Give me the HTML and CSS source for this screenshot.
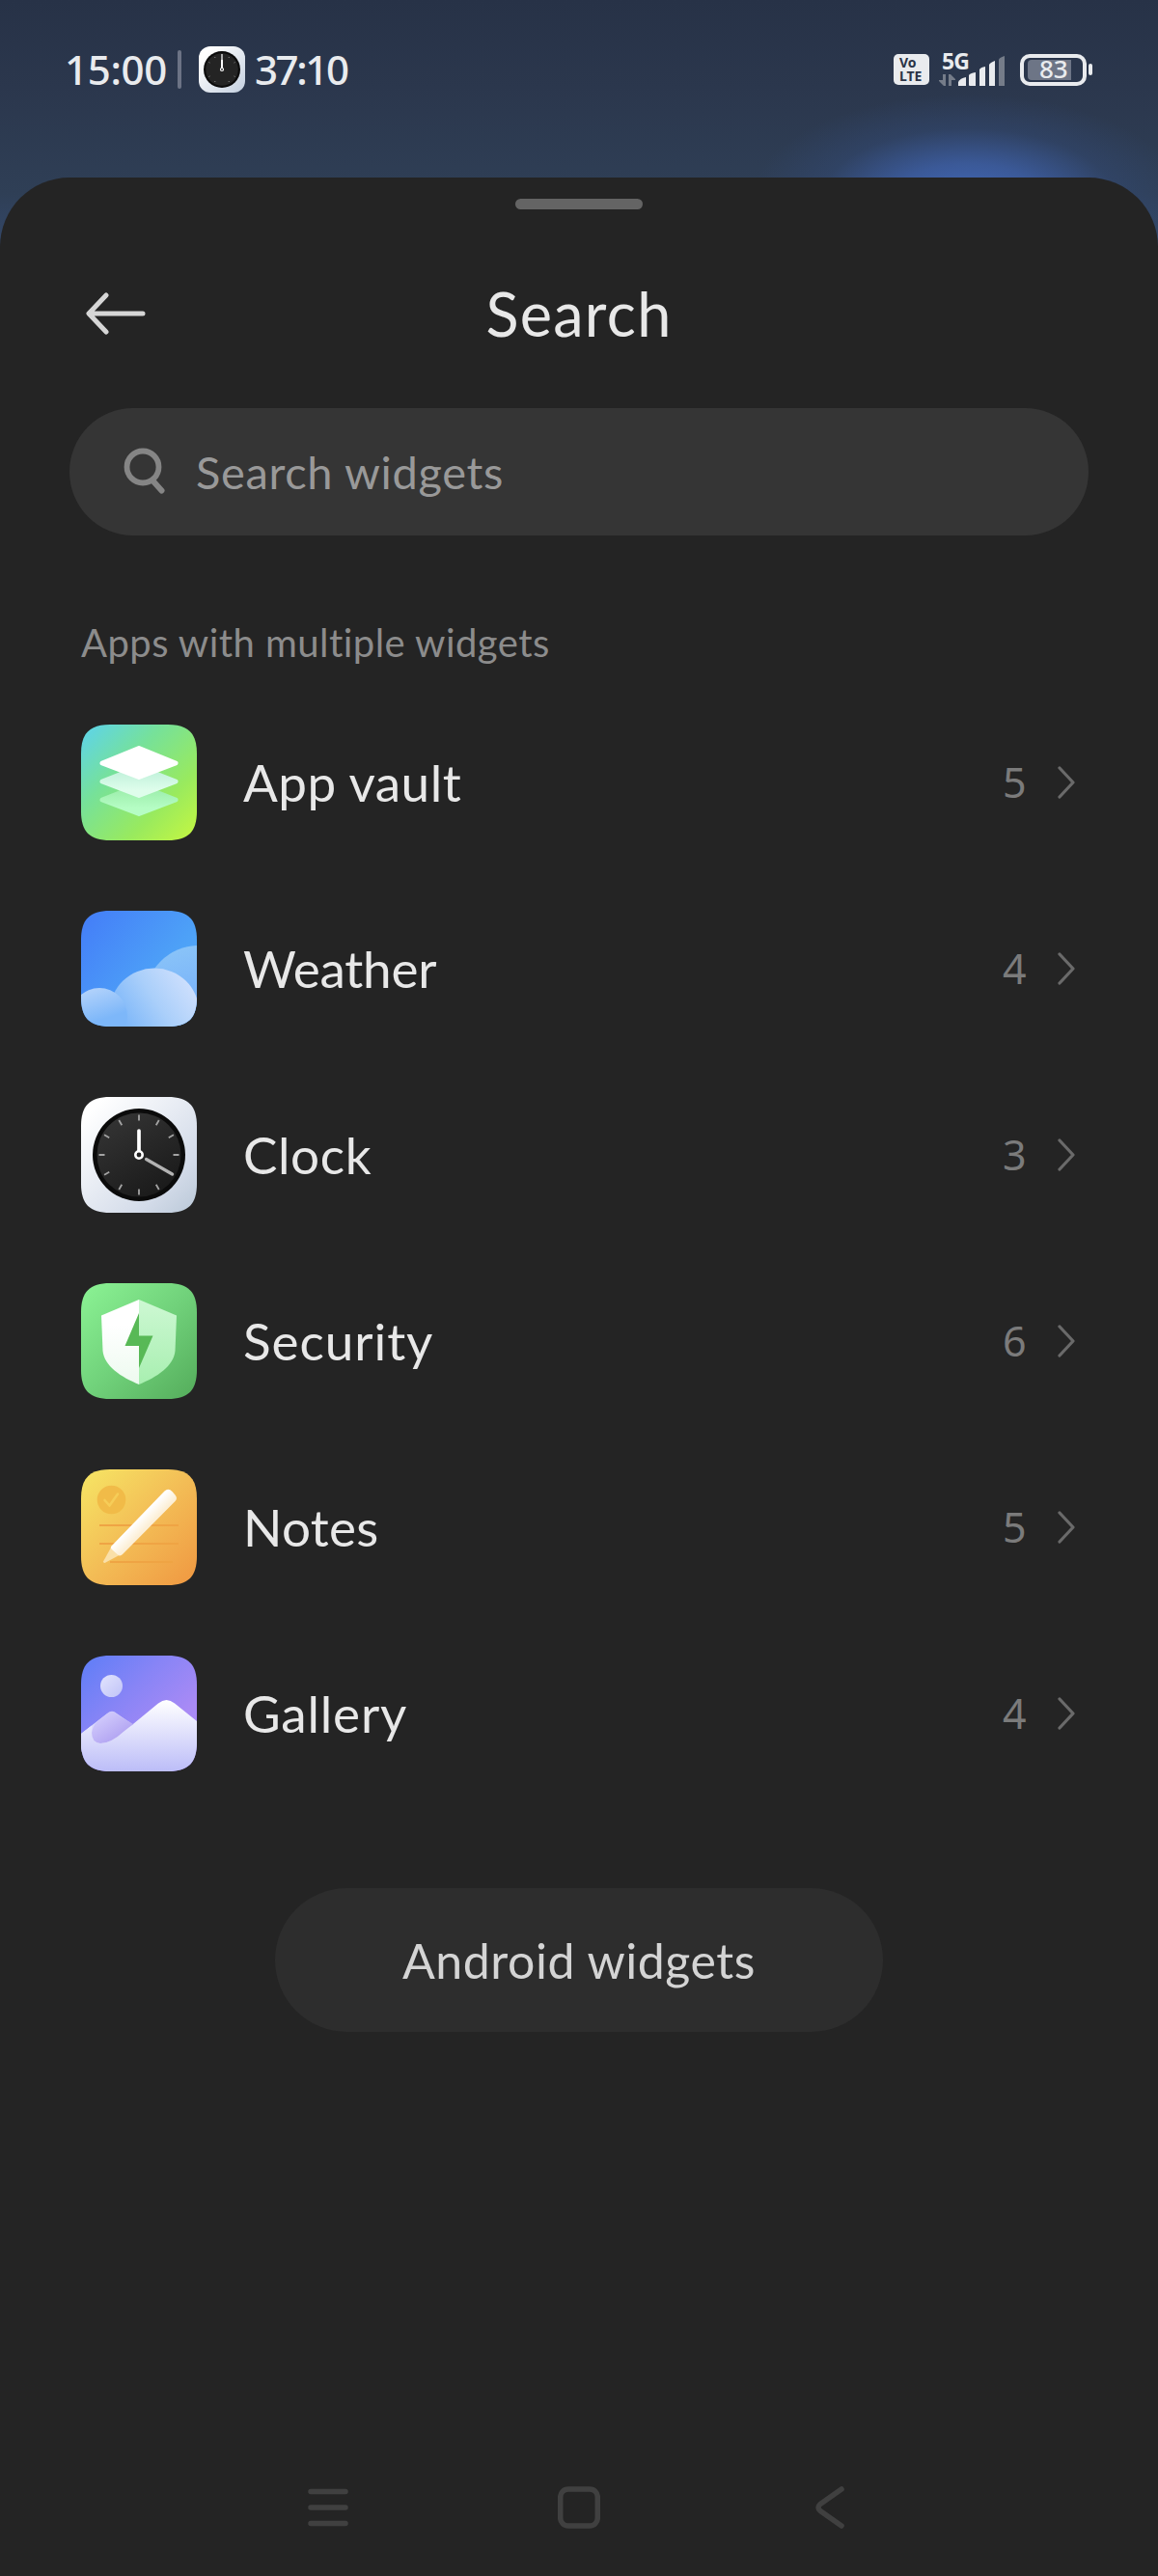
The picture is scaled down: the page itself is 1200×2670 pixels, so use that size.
FILE: index.html
```
<!DOCTYPE html>
<html lang="en">

<head>
    <meta charset="UTF-8">
    <meta name="viewport" content="width=device-width, initial-scale=1.0">
    <title>Search widgets</title>
    <link rel="stylesheet" href="styles.css">
</head>

<body>
    <header class="status-bar">
        <div class="status-left">
            <span class="status-time">15:00</span>
            <span class="status-divider"></span>
            <svg class="status-clock" viewBox="0 0 48 48">
                <defs>
                    <linearGradient id="miniBg" x1="0" y1="0" x2="1" y2="1">
                        <stop offset="0.15" stop-color="#fff" />
                        <stop offset="1" stop-color="#c3cfdf" />
                    </linearGradient>
                </defs>
                <rect width="48" height="48" rx="12" fill="url(#miniBg)" />
                <circle cx="24" cy="24" r="19" fill="#0b0b0b" />
                <circle cx="24" cy="24" r="16.8" fill="#242424" />
                <path d="M16.500 11l.6 1M31.500 11l-.6 1M10.500 16.500l1 .6M37.500 16.500l-1 .6M10.500 31.500l1-.6M37.500 31.500l-1-.6M16.500 37l.6-1M31.500 37l-.6-1" stroke="#888" stroke-width="1" />
                <path d="M24 8v14" stroke="#aaa" stroke-width="2" />
                <path d="M24 14v9" stroke="#fff" stroke-width="2" />
                <circle cx="24" cy="24" r="1.500" fill="#222" stroke="#fff" stroke-width="1.200" />
            </svg>
            <span class="status-timer">37:10</span>
        </div>
        <div class="status-right">
            <div class="volte"><span>Vo</span><span>LTE</span></div>
            <div class="signal">
                <span class="network">5G</span>
                <svg viewBox="0 0 70 36" width="70" height="36">
                    <g fill="#757c89">
                        <path d="M4 23h3v12h-2l-5-5v-1h4zM10 23h2l5 5v1h-4v6h-3z" />
                        <path d="M62 8q0-2 6-4v31h-6z" />
                    </g>
                    <g fill="#e9ebee">
                        <path d="M20 31q2-4 8-5v9h-8z" />
                        <path d="M31 24q1-2 7-3v14h-6q-1 0-1-1z" />
                        <path d="M42 18q1-2 6-3v20h-6z" />
                        <path d="M52 13q1-2 6-4v26h-6z" />
                    </g>
                </svg>
            </div>
            <div class="battery"><div class="battery-level"></div><span>83</span></div>
            <div class="battery-tip"></div>
        </div>
    </header>

    <main class="sheet">
        <div class="handle"></div>
        <div class="title-bar">
            <svg class="back" viewBox="0 0 62 44" fill="none" stroke="#d6d6d6" stroke-width="5" stroke-linecap="round" stroke-linejoin="round">
                <path d="M21 3L3 22l18 19M4 22h55" />
            </svg>
            <h1>Search</h1>
        </div>

        <div class="search-box">
            <svg viewBox="0 0 44 50" fill="none" stroke="#858585" stroke-width="5.800" stroke-linecap="round">
                <circle cx="20" cy="20" r="16.500" />
                <path d="M31 35l8.500 9.500" stroke-width="6" />
            </svg>
            <span>Search widgets</span>
        </div>

        <p class="section-label">Apps with multiple widgets</p>

        <ul class="app-list">
            <li>
                <svg class="app-icon" viewBox="0 0 120 120">
                    <defs>
                        <clipPath id="squircle">
                            <path d="M30 0H90C111 0 120 9 120 30V90C120 111 111 120 90 120H30C9 120 0 111 0 90V30C0 9 9 0 30 0Z" />
                        </clipPath>
                        <linearGradient id="vaultBg" x1="0" y1="0" x2="1" y2="1">
                            <stop offset="0.08" stop-color="#62d6dc" />
                            <stop offset="0.35" stop-color="#76e19a" />
                            <stop offset="0.7" stop-color="#99ea5e" />
                            <stop offset="0.95" stop-color="#bff545" />
                        </linearGradient>
                        <linearGradient id="vaultMid" x1="0" y1="0" x2="0" y2="1">
                            <stop offset="0.2" stop-color="#c3f2dc" />
                            <stop offset="0.8" stop-color="#defdeb" />
                        </linearGradient>
                        <linearGradient id="vaultLow" x1="0" y1="0" x2="0" y2="1">
                            <stop offset="0.2" stop-color="#9fefae" />
                            <stop offset="0.8" stop-color="#b5fdc4" />
                        </linearGradient>
                    </defs>
                    <g clip-path="url(#squircle)">
                        <rect width="120" height="120" fill="url(#vaultBg)" />
                        <g stroke-width="5" stroke-linejoin="round">
                            <path d="M60 63L98 78 60 92.500 22 78z" fill="url(#vaultLow)" stroke="url(#vaultLow)" />
                            <path d="M60 44L98 59 60 73.500 22 59z" fill="url(#vaultMid)" stroke="url(#vaultMid)" />
                            <path d="M60 24.500L98 40 60 54.500 22 40z" fill="#fff" stroke="#fff" />
                        </g>
                    </g>
                </svg>
                <span class="app-name vault">App vault</span>
                <span class="app-count">5</span>
                <svg class="chevron" viewBox="0 0 18 34"><path d="M2 2l14 15L2 32" /></svg>
            </li>
            <li>
                <svg class="app-icon" viewBox="0 0 120 120">
                    <defs>
                        <linearGradient id="sky" x1="0" y1="0" x2="1" y2="0.800">
                            <stop offset="0.05" stop-color="#447ff8" />
                            <stop offset="0.65" stop-color="#4da0f7" />
                            <stop offset="1" stop-color="#55b0f8" />
                        </linearGradient>
                        <linearGradient id="cloudBack" x1="0.300" y1="0" x2="0.500" y2="0.700">
                            <stop offset="0" stop-color="#8ac4f8" />
                            <stop offset="1" stop-color="#72acfa" />
                        </linearGradient>
                        <linearGradient id="cloudMain" gradientUnits="userSpaceOnUse" x1="108" y1="68" x2="42" y2="112">
                            <stop offset="0" stop-color="#cddffd" />
                            <stop offset="0.5" stop-color="#aacffa" />
                            <stop offset="1" stop-color="#7db7f9" />
                        </linearGradient>
                        <linearGradient id="cloudLeft" gradientUnits="userSpaceOnUse" x1="17" y1="80" x2="27" y2="111">
                            <stop offset="0" stop-color="#b0d1fb" />
                            <stop offset="1" stop-color="#7db7f9" />
                        </linearGradient>
                    </defs>
                    <g clip-path="url(#squircle)">
                        <rect width="120" height="120" fill="url(#sky)" />
                        <circle cx="122" cy="92" r="56" fill="url(#cloudBack)" />
                        <ellipse cx="76" cy="104" rx="46" ry="44.500" fill="url(#cloudMain)" />
                        <circle cx="19" cy="109" r="29" fill="url(#cloudLeft)" />
                    </g>
                </svg>
                <span class="app-name weather">Weather</span>
                <span class="app-count">4</span>
                <svg class="chevron" viewBox="0 0 18 34"><path d="M2 2l14 15L2 32" /></svg>
            </li>
            <li>
                <svg class="app-icon" viewBox="0 0 120 120">
                    <defs>
                        <linearGradient id="clockBg" x1="0" y1="0" x2="1" y2="1">
                            <stop offset="0.1" stop-color="#fff" />
                            <stop offset="0.75" stop-color="#d3dbe9" />
                            <stop offset="0.95" stop-color="#bfccdb" />
                        </linearGradient>
                        <linearGradient id="clockFace" x1="0.200" y1="0" x2="0.800" y2="1">
                            <stop offset="0" stop-color="#343434" />
                            <stop offset="1" stop-color="#191919" />
                        </linearGradient>
                    </defs>
                    <g clip-path="url(#squircle)">
                        <rect width="120" height="120" fill="url(#clockBg)" />
                        <circle cx="60" cy="60" r="48" fill="#0b0b0b" />
                        <circle cx="60" cy="60" r="43.500" fill="url(#clockFace)" />
                        <g stroke="#a3a3a3" stroke-width="1.800">
                            <path id="tick" d="M60 18.500v6M60 95.500v6M18.500 60h6M95.500 60h6" />
                            <use href="#tick" transform="rotate(30 60 60)" />
                            <use href="#tick" transform="rotate(60 60 60)" />
                        </g>
                        <path d="M67.500 64.500L94.500 80" stroke="#b3b3b3" stroke-width="3.200" stroke-linecap="round" />
                        <path d="M60 35v21" stroke="#fff" stroke-width="3.700" stroke-linecap="round" />
                        <circle cx="60" cy="60" r="3.700" fill="#222" stroke="#fff" stroke-width="2.600" />
                    </g>
                </svg>
                <span class="app-name clock">Clock</span>
                <span class="app-count">3</span>
                <svg class="chevron" viewBox="0 0 18 34"><path d="M2 2l14 15L2 32" /></svg>
            </li>
            <li>
                <svg class="app-icon" viewBox="0 0 120 120">
                    <defs>
                        <linearGradient id="secBg" x1="0" y1="0" x2="1" y2="1">
                            <stop offset="0.05" stop-color="#89f092" />
                            <stop offset="0.5" stop-color="#71d27b" />
                            <stop offset="0.95" stop-color="#57b05e" />
                        </linearGradient>
                        <linearGradient id="shieldL" x1="0" y1="0" x2="0" y2="1">
                            <stop offset="0.3" stop-color="#fff" />
                            <stop offset="1" stop-color="#edfaef" />
                        </linearGradient>
                        <linearGradient id="shieldR" x1="0" y1="0" x2="0" y2="1">
                            <stop offset="0" stop-color="#cdf8d3" />
                            <stop offset="1" stop-color="#a8efb0" />
                        </linearGradient>
                    </defs>
                    <g clip-path="url(#squircle)">
                        <rect width="120" height="120" fill="url(#secBg)" />
                        <path d="M60 17L21 33.500 22.500 70C24 86 41 97 60 105z" fill="url(#shieldL)" />
                        <path d="M60 17L99 33.500 97.500 70C96 86 79 97 60 105z" fill="url(#shieldR)" />
                        <path d="M60 31V54.500H74.500L60 88V65H45.500z" fill="#58b956" />
                    </g>
                </svg>
                <span class="app-name security">Security</span>
                <span class="app-count">6</span>
                <svg class="chevron" viewBox="0 0 18 34"><path d="M2 2l14 15L2 32" /></svg>
            </li>
            <li>
                <svg class="app-icon" viewBox="0 0 120 120">
                    <defs>
                        <linearGradient id="notesBg" x1="0" y1="0" x2="1" y2="1">
                            <stop offset="0.05" stop-color="#f6e263" />
                            <stop offset="0.5" stop-color="#f3bd56" />
                            <stop offset="0.95" stop-color="#f09b43" />
                        </linearGradient>
                        <linearGradient id="pen" x1="58" y1="46" x2="70" y2="58" gradientUnits="userSpaceOnUse">
                            <stop offset="0.3" stop-color="#fff" />
                            <stop offset="1" stop-color="#fcefd6" />
                        </linearGradient>
                    </defs>
                    <g clip-path="url(#squircle)">
                        <rect width="120" height="120" fill="url(#notesBg)" />
                        <circle cx="31.500" cy="31.500" r="14.800" fill="#f1bb48" />
                        <path d="M24.500 32l5 5.500 8.500-12" fill="none" stroke="#f6cd58" stroke-width="2.600" stroke-linecap="round" stroke-linejoin="round" />
                        <path d="M19 58h82M19 77h82M30 96h65" stroke="#efa444" stroke-width="2" />
                        <path d="M31 81L23 95.500q0 1.800 2 1.300L39.500 89z" fill="#fae0a8" />
                        <path d="M31 80L86.500 22.500q4-3.500 8 .5l3 3.500q3 3.500 0 6.500L43 88q-2.500 2.500-5 .5l-6-5.500q-2-1.500-1-3z" fill="url(#pen)" />
                    </g>
                </svg>
                <span class="app-name notes">Notes</span>
                <span class="app-count">5</span>
                <svg class="chevron" viewBox="0 0 18 34"><path d="M2 2l14 15L2 32" /></svg>
            </li>
            <li>
                <svg class="app-icon" viewBox="0 0 120 120">
                    <defs>
                        <linearGradient id="galBg" x1="0" y1="0" x2="0.700" y2="0.700">
                            <stop offset="0.05" stop-color="#617ef7" />
                            <stop offset="0.5" stop-color="#8684f6" />
                            <stop offset="1" stop-color="#a98af5" />
                        </linearGradient>
                        <linearGradient id="snow" x1="0" y1="0" x2="0" y2="1">
                            <stop offset="0" stop-color="#fff" />
                            <stop offset="1" stop-color="#bcbdf8" />
                        </linearGradient>
                        <linearGradient id="hill" x1="0" y1="0" x2="0" y2="1">
                            <stop offset="0" stop-color="#cfcbfb" />
                            <stop offset="0.6" stop-color="#e4e3fc" />
                        </linearGradient>
                        <linearGradient id="shade" x1="0.200" y1="0.200" x2="0.700" y2="0.800">
                            <stop offset="0" stop-color="#cfc8fb" />
                            <stop offset="1" stop-color="#b2a4f2" />
                        </linearGradient>
                        <linearGradient id="moon" x1="0" y1="0" x2="1" y2="1">
                            <stop offset="0" stop-color="#e2e4fd" />
                            <stop offset="1" stop-color="#c0c3f8" />
                        </linearGradient>
                    </defs>
                    <g clip-path="url(#squircle)">
                        <rect width="120" height="120" fill="url(#galBg)" />
                        <circle cx="31.500" cy="31.500" r="11.500" fill="url(#moon)" />
                        <path d="M0 81L27 60q5-4.500 10 0L53 71 40 100H0z" fill="url(#hill)" />
                        <path d="M0 120V81L11 72.500V82Q12 91 22 91 31 90 43 80L80 49.500q8.500-7 17 0L120 68v52z" fill="url(#snow)" />
                        <path d="M26 61q6-5 11 0L54 71 45 78Q31 91 20 91 11 90 11 80 12 73 17 68z" fill="url(#shade)" />
                    </g>
                </svg>
                <span class="app-name gallery">Gallery</span>
                <span class="app-count">4</span>
                <svg class="chevron" viewBox="0 0 18 34"><path d="M2 2l14 15L2 32" /></svg>
            </li>
        </ul>

        <button class="android-widgets">Android widgets</button>

        <nav class="nav-bar">
            <svg viewBox="0 0 44 48"><path d="M4 7.500h36M4 24h36M4 40.500h36" /></svg>
            <svg viewBox="0 0 44 48"><rect x="2.700" y="5" width="38.600" height="38" rx="8" /></svg>
            <svg viewBox="0 0 44 48"><path d="M34 5L12 20.500Q8 24 12 27.500L34 43" /></svg>
        </nav>
    </main>
</body>

</html>
```
FILE: styles.css
```
* {
    box-sizing: border-box;
}

body {
    margin: 0;
    width: 1200px;
    height: 2670px;
    overflow: hidden;
    font-family: Lato, "Noto Sans", sans-serif;
    color: #e8e8e8;
    background:
        radial-gradient(ellipse 225px 110px at 1003px 208px, #4268b8 0%, rgba(62, 96, 168, 0.8) 35%, rgba(52, 78, 130, 0.35) 68%, rgba(45, 65, 100, 0) 100%),
        linear-gradient(#273247 0, #2b374d 90px, #2f3f56 200px, #34486a 260px);
}

svg {
    display: block;
    flex: none;
}

/* Status bar */
.status-bar {
    height: 184px;
    padding: 48px 68px 0 67px;
    display: flex;
    justify-content: space-between;
    align-items: flex-start;
    font-family: "Noto Sans", sans-serif;
    font-weight: 500;
    color: #e9ebee;
}

.status-left,
.status-right {
    display: flex;
    align-items: center;
    height: 48px;
}

.status-time,
.status-timer {
    font-size: 42px;
    line-height: 48px;
}

.status-time {
    width: 117px;
    letter-spacing: -0.3px;
}

.status-timer {
    letter-spacing: -2.4px;
}

.status-divider {
    width: 4px;
    height: 40px;
    margin-right: 18px;
    border-radius: 2px;
    background: #6c7385;
}

.status-clock {
    width: 48px;
    height: 48px;
    margin-right: 10px;
}

.volte {
    width: 37px;
    height: 32px;
    margin-right: 10px;
    padding: 2px 0 0 6px;
    border-radius: 5px;
    background: #e9ebee;
    color: #2a3346;
    font-size: 14px;
    font-weight: 700;
    line-height: 14px;
    display: flex;
    flex-direction: column;
}

.signal {
    position: relative;
    width: 70px;
    margin-right: 14px;
}

.network {
    position: absolute;
    left: 3px;
    top: -1px;
    font-size: 23px;
    font-weight: 700;
    line-height: 20px;
    letter-spacing: -1px;
}

.battery {
    position: relative;
    width: 69px;
    height: 33px;
    padding: 2px 4px;
    border: 4px solid #e9ebee;
    border-radius: 10px;
}

.battery-level {
    width: 45px;
    height: 21px;
    border-radius: 4px 0 0 4px;
    background: #6d7586;
}

.battery span {
    position: absolute;
    left: 16px;
    top: -1px;
    font-size: 26px;
    line-height: 25px;
}

.battery-tip {
    width: 4px;
    height: 12px;
    margin-left: 2px;
    border-radius: 2px;
    background: #e9ebee;
}

/* Sheet */
.sheet {
    height: 2486px;
    padding-top: 22px;
    border-radius: 72px 72px 0 0;
    background: #242424;
    display: flex;
    flex-direction: column;
}

.handle {
    width: 132px;
    height: 11px;
    margin: 0 auto;
    border-radius: 6px;
    background: #646464;
    flex: none;
}

.title-bar {
    display: grid;
    grid-template-columns: 61px 1fr 61px;
    align-items: center;
    height: 80px;
    margin: 68px 89px 0;
}

.back {
    width: 62px;
    height: 44px;
}

h1 {
    margin: 0;
    font-size: 63px;
    font-weight: 400;
    line-height: 80px;
    letter-spacing: 1.3px;
    text-align: center;
}

.search-box {
    display: flex;
    align-items: center;
    height: 132px;
    margin: 58px 72px 0;
    padding-left: 56px;
    border-radius: 66px;
    background: #353535;
    color: #999;
    font-size: 47px;
    letter-spacing: 0.65px;
}

.search-box svg {
    width: 44px;
    height: 50px;
    margin-right: 31px;
}

.section-label {
    margin: 86px 0 0 84px;
    height: 50px;
    line-height: 50px;
    font-size: 40px;
    letter-spacing: 0.45px;
    color: #8c8c8c;
}

/* App list */
.app-list {
    list-style: none;
    margin: 60px 84px 0;
    padding: 0;
    display: flex;
    flex-direction: column;
    gap: 73px;
}

.app-list li {
    display: flex;
    align-items: center;
    height: 120px;
}

.app-icon {
    width: 120px;
    height: 120px;
    margin-right: 48px;
}

.app-name {
    flex: 1;
    font-size: 53px;
    line-height: 64px;
}

.vault {
    letter-spacing: 0.5px;
}

.weather {
    letter-spacing: -0.2px;
}

.clock {
    letter-spacing: 0.6px;
}

.security {
    letter-spacing: 0.95px;
}

.notes {
    letter-spacing: 0.3px;
}

.gallery {
    letter-spacing: 0.8px;
}

.app-count {
    width: 57px;
    font-family: "Noto Sans", sans-serif;
    font-size: 43px;
    line-height: 60px;
    color: #7b7b7b;
}

.chevron {
    width: 18px;
    height: 34px;
    margin-right: 2px;
    fill: none;
    stroke: #6a6a6a;
    stroke-width: 3.2;
    stroke-linecap: round;
    stroke-linejoin: round;
}

.android-widgets {
    width: 630px;
    height: 149px;
    margin: 121px auto 0;
    border: none;
    border-radius: 75px;
    background: #2d2d2d;
    color: #d4d4d4;
    font-family: inherit;
    font-size: 50px;
    letter-spacing: 0.55px;
    flex: none;
}

/* Navigation bar */
.nav-bar {
    display: flex;
    justify-content: space-between;
    margin: auto 318px 47px;
}

.nav-bar svg {
    width: 44px;
    height: 48px;
    fill: none;
    stroke: #404040;
    stroke-width: 5.5;
    stroke-linecap: round;
    stroke-linejoin: round;
}
```
